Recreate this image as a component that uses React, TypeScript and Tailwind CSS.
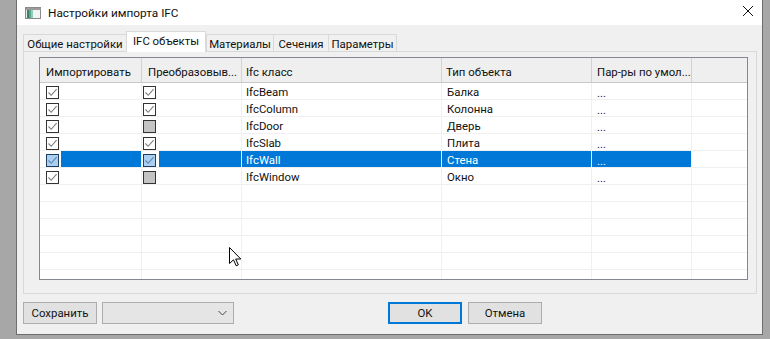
import React from 'react';

type Row = {
  cls: string;
  type: string;
  conv: boolean;
  selected?: boolean;
};

const rows: Row[] = [
  { cls: 'IfcBeam', type: 'Балка', conv: true },
  { cls: 'IfcColumn', type: 'Колонна', conv: true },
  { cls: 'IfcDoor', type: 'Дверь', conv: false },
  { cls: 'IfcSlab', type: 'Плита', conv: true },
  { cls: 'IfcWall', type: 'Стена', conv: true, selected: true },
  { cls: 'IfcWindow', type: 'Окно', conv: false },
];

const tabs = [
  { label: 'Общие настройки', w: 'w-[103px]' },
  { label: 'IFC объекты', w: 'w-[80px]', active: true },
  { label: 'Материалы', w: 'w-[67px]' },
  { label: 'Сечения', w: 'w-[55px]' },
  { label: 'Параметры', w: 'w-[69px]' },
];

function CheckBox({ on, selected }: { on: boolean; selected?: boolean }) {
  const bg = selected ? 'bg-[#a9cff2] border-[#1f3d5e]' : on ? 'bg-white border-[#333333]' : 'bg-[#c4c4c4] border-[#333333]';
  return (
    <div className={`mt-[3px] w-[13px] h-[13px] border shrink-0 ${bg}`}>
      {on && (
        <svg width="11" height="11" viewBox="0 0 11 11">
          <path d="M1.5 5.5 L4.2 8.3 L9.6 2.2" fill="none" stroke={selected ? '#5f86ad' : '#7d7d7d'} strokeWidth="1.1" />
        </svg>
      )}
    </div>
  );
}

function Cursor() {
  return (
    <svg className="absolute left-[229px] top-[247px]" width="13" height="20" viewBox="0 0 13 20">
      <path d="M0.5 0.5 L0.5 16.5 L4.5 12.8 L7.2 18.8 L9.3 17.9 L6.7 12 L11.8 12 Z" fill="white" stroke="black" strokeWidth="1" strokeLinejoin="round" />
    </svg>
  );
}

function GridRow({ row }: { row?: Row }) {
  const sel = row?.selected;
  const blue = sel ? 'bg-[#0078d7] text-white' : '';
  return (
    <div className="flex h-[17px] border-b border-[#f0f0f0] shrink-0">
      <div className="flex w-[102px] border-r border-[#f0f0f0]">
        <div className="w-[6px]" />
        {row && <CheckBox on selected={sel} />}
        <div className="w-[2px]" />
        <div className={`flex-1 ${blue}`} />
      </div>
      <div className="flex w-[100px] border-r border-[#f0f0f0]">
        <div className="w-[1px]" />
        {row && <CheckBox on={row.conv} selected={sel} />}
        <div className="w-[3px]" />
        <div className={`flex-1 ${blue}`} />
      </div>
      <div className={`w-[200px] border-r border-[#f0f0f0] pl-[4px] pt-[1px] ${blue}`}>{row?.cls}</div>
      <div className={`w-[150px] border-r border-[#f0f0f0] pl-[5px] pt-[1px] ${blue}`}>{row?.type}</div>
      <div className={`w-[100px] border-r border-[#f0f0f0] pl-[5px] pt-[2px] ${sel ? 'bg-[#0078d7] text-white' : 'text-[#1c1c5a]'}`}>
        {row ? '...' : ''}
      </div>
      <div className="flex-1" />
    </div>
  );
}

export default function App() {
  return (
    <div className="relative w-[770px] h-[339px] overflow-hidden bg-[#a7a7a7] font-['Roboto',sans-serif] text-[11.4px] leading-[16px] text-[#111]">
      <div className="ml-[16px] w-[747px] h-[335px] flex flex-col bg-[#f0f0f0] border-l border-r border-b border-[#6e6e6e]">
        {/* title bar */}
        <div className="h-[25px] bg-white flex items-center shrink-0">
          <svg className="ml-[8px]" width="16" height="12" viewBox="0 0 16 12">
            <rect x="0.5" y="0.5" width="15" height="11" fill="#ececec" stroke="#8a8a8a" />
            <rect x="1" y="1" width="15" height="2" fill="#9a9a9a" />
            <rect x="2" y="3" width="2" height="8" fill="#3f7f6c" />
            <rect x="4" y="3" width="2" height="8" fill="#5aa88c" />
            <rect x="6" y="3" width="2" height="8" fill="#8fd0b8" />
            <rect x="8" y="3" width="7" height="8" fill="#f4f4f4" />
          </svg>
          <span className="ml-[7px] text-[11.8px]">Настройки импорта IFC</span>
          <div className="flex-1" />
          <svg className="mr-[9px] mt-[-3px]" width="10" height="10" viewBox="0 0 10 10">
            <path d="M0 0 L10 10 M10 0 L0 10" stroke="#111" strokeWidth="1" />
          </svg>
        </div>

        {/* tabs */}
        <div className="flex items-end h-[26px] ml-[6px] shrink-0">
          {tabs.map((t, i) =>
            t.active ? (
              <div
                key={t.label}
                className={`${t.w} h-[21px] -mb-px relative z-10 bg-white border-t border-l border-r border-[#d9d9d9] flex items-center justify-center pb-[2px]`}
              >
                {t.label}
              </div>
            ) : (
              <div
                key={t.label}
                className={`${t.w} h-[17px] bg-[#f0f0f0] border-t border-l border-[#d9d9d9] ${i === tabs.length - 1 ? 'border-r' : ''} flex items-center justify-center pt-[1px]`}
              >
                {t.label}
              </div>
            )
          )}
        </div>

        {/* tab pane */}
        <div className="ml-[6px] w-[734px] h-[243px] border border-[#d9d9d9] pl-[15px] pt-[5px] shrink-0">
          <div className="relative w-[709px] h-[223px] border border-[#828790] bg-white flex flex-col overflow-hidden">
            <div className="flex h-[25px] bg-[#efefef] border-b border-[#c9c9c9] shrink-0">
              <div className="w-[102px] border-r border-[#d2d2d2] pl-[6px] pt-[6px]">Импортировать</div>
              <div className="w-[100px] border-r border-[#d2d2d2] pl-[6px] pt-[6px] whitespace-nowrap">Преобразовыв...</div>
              <div className="w-[200px] border-r border-[#d2d2d2] pl-[4px] pt-[6px]">Ifc класс</div>
              <div className="w-[150px] border-r border-[#d2d2d2] pl-[4px] pt-[6px]">Тип объекта</div>
              <div className="w-[100px] border-r border-[#d2d2d2] pl-[5px] pt-[6px] whitespace-nowrap">Пар-ры по умол...</div>
              <div className="flex-1" />
            </div>
            {rows.map((r) => (
              <GridRow key={r.cls} row={r} />
            ))}
            {Array.from({ length: 6 }).map((_, i) => (
              <GridRow key={i} />
            ))}
          </div>
        </div>

        {/* bottom buttons */}
        <div className="flex mt-[8px] ml-[6px] h-[22px]">
          <button className="w-[74px] h-[22px] bg-[#e1e1e1] border border-[#adadad]">Сохранить</button>
          <div className="ml-[5px] w-[132px] h-[22px] bg-[#e5e5e5] border border-[#adadad] flex items-center justify-end pr-[6px]">
            <svg width="9" height="6" viewBox="0 0 9 6">
              <path d="M0.5 1 L4.5 5 L8.5 1" fill="none" stroke="#444" strokeWidth="1" />
            </svg>
          </div>
          <button className="ml-[154px] w-[74px] h-[22px] bg-[#e1e1e1] border-2 border-[#0078d7]">OK</button>
          <button className="ml-[6px] w-[74px] h-[22px] bg-[#e1e1e1] border border-[#adadad]">Отмена</button>
        </div>
      </div>
      <Cursor />
    </div>
  );
}
